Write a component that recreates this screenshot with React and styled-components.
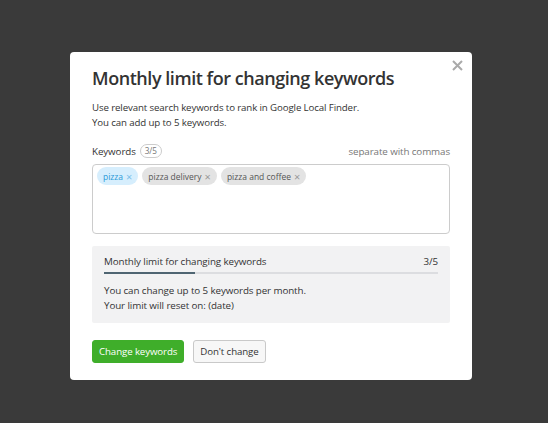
import React from "react";
import styled, { createGlobalStyle } from "styled-components";

const GlobalStyle = createGlobalStyle`
  html, body {
    margin: 0;
    padding: 0;
    background: #3a3a3a;
  }
  body {
    font-family: "Open Sans", "Noto Sans", sans-serif;
    color: #333;
  }
`;

const Backdrop = styled.div`
  width: 548px;
  height: 423px;
  background: #3a3a3a;
  display: flex;
  align-items: flex-start;
  padding: 52px 0 0 70px;
  box-sizing: border-box;
`;

const Modal = styled.div`
  position: relative;
  width: 402px;
  height: 328px;
  background: #fff;
  border-radius: 4px;
  padding: 13px 22px 0 22px;
  box-sizing: border-box;
  display: flex;
  flex-direction: column;
`;

const Close = styled.button`
  position: absolute;
  top: 5px;
  right: 7px;
  width: 16px;
  height: 16px;
  padding: 0;
  border: none;
  background: none;
  display: flex;
  align-items: center;
  justify-content: center;
`;

const Title = styled.h1`
  margin: 0;
  font-size: 18px;
  font-weight: 600;
  line-height: 26px;
  color: #333;
  letter-spacing: -0.45px;
`;

const Desc = styled.p`
  margin: 9px 0 0;
  font-size: 9.7px;
  letter-spacing: -0.12px;
  line-height: 15px;
  color: #333;
`;

const LabelRow = styled.div`
  margin-top: 13px;
  display: flex;
  align-items: center;
  justify-content: space-between;
  height: 16px;
`;

const Label = styled.span`
  font-size: 9.8px;
  letter-spacing: -0.1px;
  color: #333;
  display: flex;
  align-items: center;
  gap: 4px;
`;

const Counter = styled.span`
  font-size: 8.2px;
  color: #777;
  border: 1px solid #ccc;
  border-radius: 8px;
  padding: 0 4px;
  line-height: 12px;
`;

const Hint = styled.span`
  font-size: 9.8px;
  letter-spacing: -0.1px;
  color: #777;
`;

const TagBox = styled.div`
  margin-top: 5px;
  height: 70px;
  border: 1px solid #ccc;
  border-radius: 4px;
  box-sizing: border-box;
  padding: 2px 4px;
  display: flex;
  align-items: flex-start;
  gap: 4px;
`;

const Tag = styled.span`
  display: inline-flex;
  align-items: center;
  gap: 3px;
  height: 18px;
  padding: 0 6px;
  border-radius: 9px;
  font-size: 8.5px;
  background: ${(p) => (p.$active ? "#d6eefd" : "#e3e3e3")};
  color: ${(p) => (p.$active ? "#2a9ad8" : "#555")};
`;

const TagX = styled.span`
  font-size: 11px;
  color: ${(p) => (p.$active ? "#7cc0ea" : "#999")};
  line-height: 1;
`;

const LimitBox = styled.div`
  margin-top: 12px;
  background: #f2f2f3;
  border-radius: 2px;
  padding: 9px 12px 10px;
  display: flex;
  flex-direction: column;
`;

const LimitHead = styled.div`
  display: flex;
  justify-content: space-between;
  font-size: 9.8px;
  letter-spacing: -0.1px;
  line-height: 14px;
  color: #333;
`;

const Track = styled.div`
  margin-top: 3px;
  height: 2px;
  background: #dcdde0;
`;

const Fill = styled.div`
  height: 100%;
  background: #4f6572;
`;

const LimitText = styled.p`
  margin: 9px 0 0;
  font-size: 9.8px;
  letter-spacing: -0.1px;
  line-height: 15px;
  color: #333;
`;

const Actions = styled.div`
  margin-top: 17px;
  display: flex;
  gap: 9px;
`;

const Button = styled.button`
  height: 23px;
  padding: 0 6px;
  border-radius: 3px;
  font-family: inherit;
  font-size: 9.7px;
  letter-spacing: -0.1px;
  border: 1px solid ${(p) => (p.$primary ? "#3fae2a" : "#c9c9c9")};
  background: ${(p) => (p.$primary ? "#3fae2a" : "#f7f7f7")};
  color: ${(p) => (p.$primary ? "#fff" : "#333")};
`;

const tags = [
  { text: "pizza", active: true },
  { text: "pizza delivery" },
  { text: "pizza and coffee" },
];

export default function App() {
  return (
    <>
      <GlobalStyle />
      <Backdrop>
        <Modal>
          <Close aria-label="close">
            <svg width="11" height="11" viewBox="0 0 11 11">
              <path d="M1 1L10 10M10 1L1 10" stroke="#aaa" strokeWidth="2" />
            </svg>
          </Close>
          <Title>Monthly limit for changing keywords</Title>
          <Desc>
            Use relevant search keywords to rank in Google Local Finder.
            <br />
            You can add up to 5 keywords.
          </Desc>
          <LabelRow>
            <Label>
              Keywords <Counter>3/5</Counter>
            </Label>
            <Hint>separate with commas</Hint>
          </LabelRow>
          <TagBox>
            {tags.map((t) => (
              <Tag key={t.text} $active={t.active}>
                {t.text}
                <TagX $active={t.active}>×</TagX>
              </Tag>
            ))}
          </TagBox>
          <LimitBox>
            <LimitHead>
              <span>Monthly limit for changing keywords</span>
              <span>3/5</span>
            </LimitHead>
            <Track>
              <Fill style={{ width: `${(91 / 334) * 100}%` }} />
            </Track>
            <LimitText>
              You can change up to 5 keywords per month.
              <br />
              Your limit will reset on: (date)
            </LimitText>
          </LimitBox>
          <Actions>
            <Button $primary>Change keywords</Button>
            <Button>Don't change</Button>
          </Actions>
        </Modal>
      </Backdrop>
    </>
  );
}
